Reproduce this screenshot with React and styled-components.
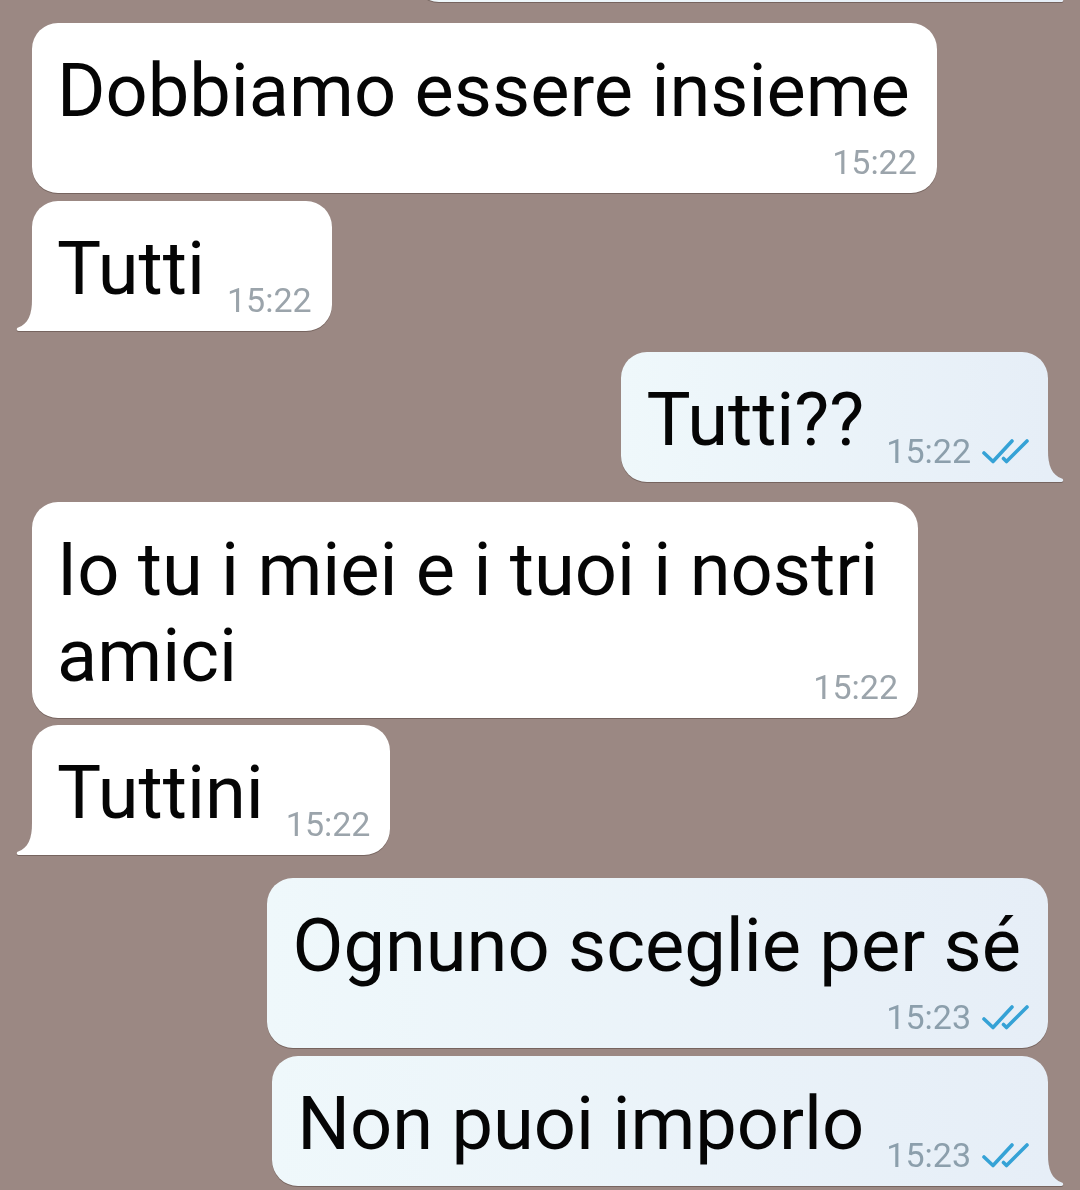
import React from "react";
import styled, { createGlobalStyle, css } from "styled-components";

const GlobalStyle = createGlobalStyle`
  html, body {
    margin: 0;
    padding: 0;
    background: #9b8883;
    overflow: hidden;
  }
  body {
    font-family: Roboto, "Noto Sans", Arial, sans-serif;
    -webkit-font-smoothing: antialiased;
  }
`;

const OUT_END = "#e6eef7";

const Chat = styled.div`
  display: flex;
  flex-direction: column;
  width: 1080px;
  height: 1190px;
  overflow: hidden;
`;

const Row = styled.div`
  display: flex;
  justify-content: ${(p) => (p.$out ? "flex-end" : "flex-start")};
  padding: 0 32px;
  margin-top: ${(p) => p.$gap}px;
`;

const Bubble = styled.div`
  position: relative;
  display: flex;
  flex-direction: ${(p) => (p.$stack ? "column" : "row")};
  align-items: flex-end;
  gap: ${(p) => (p.$stack ? 0 : 22)}px;
  max-width: ${(p) => p.$max || 910}px;
  box-sizing: border-box;
  padding: 25px 27px 19px 27px;
  border-radius: 26px;
  background: ${(p) =>
    p.$out ? `linear-gradient(to right, #eff8fb, ${OUT_END})` : "#ffffff"};
  filter: drop-shadow(0 1.5px 0.6px rgba(40, 25, 20, 0.32));
  ${(p) =>
    p.$tail &&
    (p.$out
      ? css`
          border-bottom-right-radius: 0;
        `
      : css`
          border-bottom-left-radius: 0;
        `)}
  ${(p) =>
    p.$ghost &&
    css`
      width: 635px;
      height: 130px;
    `}
`;

const Text = styled.div`
  font-size: 74px;
  line-height: 86px;
  color: #050505;
  margin-left: -2px;
`;

const Meta = styled.div`
  display: flex;
  align-items: center;
  flex-shrink: 0;
  font-size: 34px;
  line-height: 40px;
  height: 40px;
  color: ${(p) => (p.$out ? "#8c9fac" : "#9ba4ab")};
  margin-right: ${(p) => (p.$out ? -9 : -7)}px;
  margin-bottom: -8px;
  margin-top: ${(p) => (p.$pull ? -32 : p.$stack ? 8 : 0)}px;
`;

const Ticks = styled.svg`
  width: 50px;
  height: 26px;
  margin-left: 9px;
`;

const TailSvg = styled.svg`
  position: absolute;
  bottom: 0;
  width: 20px;
  height: 32px;
  ${(p) =>
    p.$out
      ? css`
          right: -16px;
          transform: scaleX(-1);
        `
      : css`
          left: -16px;
        `}
`;

function Tail({ out }) {
  return (
    <TailSvg $out={out} viewBox="0 0 20 32" aria-hidden="true">
      <path
        d="M20 0 L16 0 C16 16 12 25 2.2 28.6 C0.2 29.3 0.4 32 2.6 32 L20 32 Z"
        fill={out ? OUT_END : "#ffffff"}
      />
    </TailSvg>
  );
}

function DoubleTick() {
  return (
    <Ticks viewBox="0 0 50 26" aria-hidden="true">
      <g
        fill="none"
        stroke="#35a2d6"
        strokeWidth="3.6"
        strokeLinecap="round"
        strokeLinejoin="round"
      >
        <path d="M4 15 L13 23.5 L32 3" />
        <path d="M23.5 20.5 L26.5 23.5 L47 3" />
      </g>
    </Ticks>
  );
}

function Message({ out, text, time, stack, pull, tail, gap, max }) {
  return (
    <Row $out={out} $gap={gap}>
      <Bubble $out={out} $stack={stack} $tail={tail} $max={max}>
        <Text>{text}</Text>
        <Meta $out={out} $stack={stack} $pull={pull}>
          <span>{time}</span>
          {out && <DoubleTick />}
        </Meta>
        {tail && <Tail out={out} />}
      </Bubble>
    </Row>
  );
}

const messages = [
  { text: "Dobbiamo essere insieme", time: "15:22", stack: true, gap: 21 },
  { text: "Tutti", time: "15:22", tail: true, gap: 8 },
  { text: "Tutti??", time: "15:22", out: true, tail: true, gap: 21 },
  {
    text: "Io tu i miei e i tuoi i nostri amici",
    time: "15:22",
    stack: true,
    pull: true,
    gap: 20,
    max: 886,
  },
  { text: "Tuttini", time: "15:22", tail: true, gap: 7 },
  {
    text: "Ognuno sceglie per sé",
    time: "15:23",
    out: true,
    stack: true,
    gap: 23,
  },
  { text: "Non puoi imporlo", time: "15:23", out: true, tail: true, gap: 8 },
];

export default function App() {
  return (
    <>
      <GlobalStyle />
      <Chat>
        <Row $out $gap={-128}>
          <Bubble $out $tail $ghost>
            <Tail out />
          </Bubble>
        </Row>
        {messages.map((m, i) => (
          <Message key={i} {...m} />
        ))}
      </Chat>
    </>
  );
}
